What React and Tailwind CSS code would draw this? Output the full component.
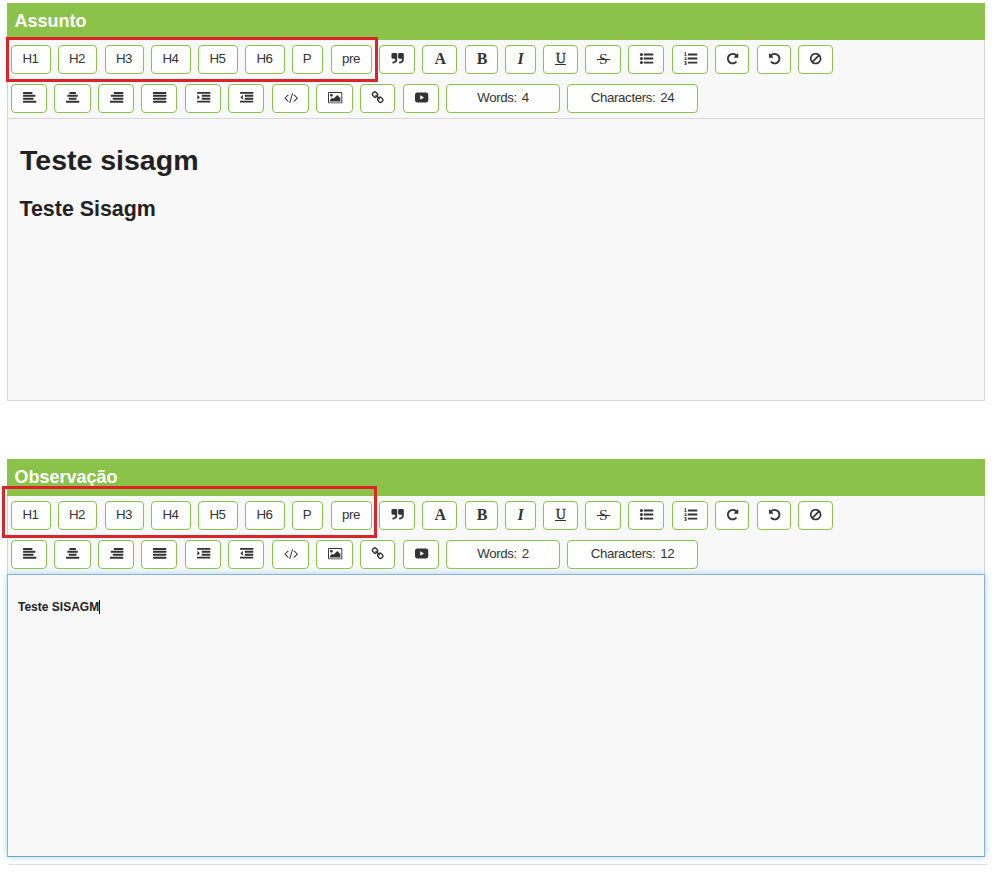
import React from "react";

function Glyph({ children, w = 1792, x = 0, px = "w-[13.3px]" }) {
  return (
    <svg viewBox={`${x} 0 ${w} 1792`} className={`${px} ml-px h-[13.3px] shrink-0 overflow-visible`} fill="currentColor">
      {children}
    </svg>
  );
}

// Four stacked bars, each given as [x, width]
function Bars({ rows }) {
  return (
    <Glyph>
      {rows.map(([x, w], i) => (
        <rect key={i} x={x} y={130 + i * 392} width={w} height="262" rx="50" />
      ))}
    </Glyph>
  );
}

function Indent({ out }) {
  return (
    <Glyph>
      <rect x="0" y="130" width="1792" height="250" rx="32" />
      <rect x="640" y="522" width="1152" height="250" rx="32" />
      <rect x="640" y="914" width="1152" height="250" rx="32" />
      <rect x="0" y="1306" width="1792" height="250" rx="32" />
      <path d={out ? "M384 520v660L50 850z" : "M50 520v660L384 850z"} />
    </Glyph>
  );
}

function List({ numbered }) {
  return (
    <Glyph>
      {[210, 754, 1298].map((y, i) => (
        <g key={y}>
          <rect x="512" y={y} width="1280" height="250" rx="32" />
          {!numbered && <circle cx="192" cy={y + 125} r="205" />}
          {numbered && i === 0 && <path d="M40 110L190 0h70v400h100v90H40v-90h110V150L90 200z" />}
          {numbered && i === 1 && <path d="M30 720q70-90 180-90 150 0 150 120 0 90-190 230h100v-60h100v160H30v-90q220-150 220-230 0-40-50-40-45 0-90 60z" />}
          {numbered && i === 2 && <path d="M40 1240h320v90l-110 110q120 20 120 150 0 170-190 170-100 0-170-60l60-80q50 40 100 40 80 0 80-60 0-70-140-60l-20-60 110-140h-70v50H40z" />}
        </g>
      ))}
    </Glyph>
  );
}

const UNDO =
  "M1664 896q0 156-61 298t-164 245-245 164-298 61q-172 0-327-72.5t-264-204.5q-7-10-6.5-22.5t8.5-20.5l137-138q10-9 25-9 16 2 23 12 73 95 179 147t225 52q104 0 198.5-40.5t163.5-109.5 109.5-163.5 40.5-198.5-40.5-198.5-109.5-163.5-163.5-109.5-198.5-40.5q-98 0-188 35.5t-160 101.5l137 138q31 30 14 69-17 40-59 40h-448q-26 0-45-19t-19-45v-448q0-42 40-59 39-17 69 14l130 129q107-101 244.5-156.5t284.5-55.5q156 0 298 61t245 164 164 245 61 298z";
const QUOTE =
  "M832 320v704q0 104-40.5 198.5t-109.5 163.5-163.5 109.5-198.5 40.5h-64q-26 0-45-19t-19-45v-128q0-26 19-45t45-19h64q106 0 181-75t75-181v-32q0-40-28-68t-68-28h-224q-80 0-136-56t-56-136v-384q0-80 56-136t136-56h384q80 0 136 56t56 136z";
const BAN =
  "M1440 893q0-161-87-295l-754 753q137 89 297 89 111 0 211.5-43.5t173.5-116.5 116-174.5 43-212.5zm-999 299l755-754q-135-91-300-91-148 0-273 73t-198 199-73 274q0 162 89 299zm1223-299q0 157-61 300t-163.5 246-245 164-298.5 61-298.5-61-245-164-163.5-246-61-300 61-299.5 163.5-245.5 245-164 298.5-61 298.5 61 245 164 163.5 245.5 61 299.5z";
const PICTURE =
  "M576 576q0 80-56 136t-136 56-136-56-56-136 56-136 136-56 136 56 56 136zm1024 384v448h-1408v-192l320-320 160 160 512-512zm96-704h-1600q-13 0-22.5 9.5t-9.5 22.5v1216q0 13 9.5 22.5t22.5 9.5h1600q13 0 22.5-9.5t9.5-22.5v-1216q0-13-9.5-22.5t-22.5-9.5zm160 32v1216q0 66-47 113t-113 47h-1600q-66 0-113-47t-47-113v-1216q0-66 47-113t113-47h1600q66 0 113 47t47 113z";
const LINK =
  "M1520 1216q0-40-28-68l-208-208q-28-28-68-28-42 0-72 32 3 3 19 18.5t21.5 21.5 15 19 13 25.5 3.5 27.5q0 40-28 68t-68 28q-15 0-27.5-3.5t-25.5-13-19-15-21.5-21.5-18.5-19q-33 31-33 73 0 40 28 68l206 207q27 27 68 27 40 0 68-26l147-146q28-28 28-67zm-703-705q0-40-28-68l-206-207q-28-28-68-28-39 0-68 27l-147 146q-28 28-28 67 0 40 28 68l208 208q27 27 68 27 42 0 72-31-3-3-19-18.5t-21.5-21.5-15-19-13-25.5-3.5-27.5q0-40 28-68t68-28q15 0 27.5 3.5t25.5 13 19 15 21.5 21.5 18.5 19q33-31 33-73zm895 705q0 120-85 203l-147 146q-83 83-203 83-121 0-204-85l-206-207q-83-83-83-203 0-123 88-209l-88-88q-86 88-208 88-120 0-204-84l-208-208q-84-84-84-204t85-203l147-146q83-83 203-83 121 0 204 85l206 207q83 83 83 203 0 123-88 209l88 88q86-88 208-88 120 0 204 84l208 208q84 84 84 204z";
const CODE =
  "M553 1399l-50 50q-10 10-23 10t-23-10l-466-466q-10-10-10-23t10-23l466-466q10-10 23-10t23 10l50 50q10 10 10 23t-10 23l-393 393 393 393q10 10 10 23t-10 23zm591-1067l-373 1291q-4 13-15.5 19.5t-23.5 2.5l-62-17q-13-4-19.5-15.5t-2.5-24.5l373-1291q4-13 15.5-19.5t23.5-2.5l62 17q13 4 19.5 15.5t2.5 24.5zm657 651l-466 466q-10 10-23 10t-23-10l-50-50q-10-10-10-23t10-23l393-393-393-393q-10-10-10-23t10-23l50-50q10-10 23-10t23 10l466 466q10 10 10 23t-10 23z";

const serif = "font-['Liberation_Serif',serif] leading-none";

const rowOne = [
  ["w-[40px]", "H1"],
  ["w-[39px]", "H2"],
  ["w-[39px] ml-px", "H3"],
  ["w-[40px]", "H4"],
  ["w-[40px]", "H5"],
  ["w-[40px]", "H6"],
  ["w-[31px]", "P"],
  ["w-[41px] ml-px", "pre"],
  ["w-[36px]", <Glyph><path d={QUOTE} /><path d={QUOTE} transform="translate(896 0)" /></Glyph>],
  ["w-[35px]", <span className={`${serif} ml-px text-[16px] font-bold`}>A</span>],
  ["w-[33px] ml-px", <span className={`${serif} ml-px text-[16px] font-bold`}>B</span>],
  ["w-[31px]", <span className={`${serif} text-[16px] font-bold italic`}>I</span>],
  ["w-[35px]", <span className={`${serif} flex h-[13px] w-[11px] justify-center border-b border-[#333] text-[14px] [-webkit-text-stroke:0.4px]`}>U</span>],
  ["w-[36px]", <span className={`${serif} flex w-[13px] justify-center bg-[linear-gradient(#333,#333)] bg-[length:100%_1px] bg-[position:0_8px] bg-no-repeat text-[15.5px]`}>S</span>],
  ["w-[36px]", <List />],
  ["w-[36px] ml-px", <List numbered />],
  ["w-[34px]", <Glyph><path d={UNDO} transform="translate(1792 0) scale(-1 1)" /></Glyph>],
  ["w-[34px] ml-px", <Glyph><path d={UNDO} /></Glyph>],
  ["w-[35px]", <Glyph><path d={BAN} /></Glyph>],
];

const rowTwo = [
  ["w-[36px]", <Bars rows={[[0, 1280], [0, 1664], [0, 1408], [0, 1792]]} />],
  ["w-[37px]", <Bars rows={[[448, 896], [192, 1408], [384, 1024], [0, 1792]]} />],
  ["w-[36px]", <Bars rows={[[512, 1280], [128, 1664], [384, 1408], [0, 1792]]} />],
  ["w-[36px]", <Bars rows={[[0, 1792], [0, 1792], [0, 1792], [0, 1792]]} />],
  ["w-[36px] ml-px", <Indent />],
  ["w-[36px]", <Indent out />],
  ["w-[37px] ml-px", <Glyph w={1920} x={-64} px="w-[14.3px]"><path d={CODE} /></Glyph>],
  ["w-[37px]", <Glyph w={1920} x={-64} px="w-[14.3px]"><path d={PICTURE} /></Glyph>],
  ["w-[35px]", <Glyph><path d={LINK} /></Glyph>],
  ["w-[36px] ml-px", <Glyph><path fillRule="evenodd" d="M300 206h1192q280 0 300 300v740q-20 300-300 300H300q-280 0-300-300V506q20-300 300-300zM710 570v620l500-310z" /></Glyph>],
];

function Button({ className, children }) {
  return (
    <button
      type="button"
      className={`flex h-[29px] shrink-0 items-center justify-center rounded-[4px] border border-[#8bc34a] bg-white pb-[2px] text-[13.3px] leading-none tracking-[-0.38px] whitespace-pre text-[#333] [word-spacing:1.5px] ${className}`}
    >
      {children}
    </button>
  );
}

function Editor({ title, words, characters, highlight, focused, children }) {
  return (
    <section className="relative mx-auto w-[978px]">
      <h3 className="h-[37px] bg-[#8bc34a] pl-[7.5px] text-[18px] leading-[36px] font-bold text-white">{title}</h3>
      <div className="flex h-[78px] flex-col gap-[10px] border-x border-[#d3d3d3] bg-[#f8f8f8] pt-[5px] pl-[3px]">
        <div className="flex gap-[7px]">
          {rowOne.map(([cls, icon], i) => (
            <Button key={i} className={cls}>
              {typeof icon === "string" ? <span className="mr-px">{icon}</span> : icon}
            </Button>
          ))}
        </div>
        <div className="flex gap-[7px]">
          {rowTwo.map(([cls, icon], i) => <Button key={i} className={cls}>{icon}</Button>)}
          <Button className="w-[114px]">Words: {words}</Button>
          <Button className="w-[131px]">Characters: {characters}</Button>
        </div>
      </div>
      <div
        className={`h-[283px] border bg-[#f8f8f8] text-[#222] ${
          focused ? "relative border-[#8aaee0] border-b-[#6ba3b8] shadow-[0_0_7px_#a9d4f8]" : "border-[#d8d8d8]"
        }`}
      >
        {children}
      </div>
      <div className={`pointer-events-none absolute border-[3px] border-[#dc232a] ${highlight}`} />
    </section>
  );
}

export default function App() {
  return (
    <main className="h-[875px] w-[997px] overflow-hidden bg-white pt-[3px] pr-[5px] font-['Liberation_Sans',Arial,sans-serif]">
      <div className="w-[992px]">
        <Editor title="Assunto" words="4" characters="24" highlight="top-[34px] -left-px h-[45px] w-[372px]">
          <h1 className="pt-[23px] pl-[12px] text-[28.5px] leading-[36px] font-bold">Teste sisagm</h1>
          <h2 className="pt-[18px] pl-[11.5px] text-[21.4px] leading-[26px] font-bold">Teste Sisagm</h2>
        </Editor>
        <div className="h-[58px]" />
        <Editor title="Observação" words="2" characters="12" focused highlight="top-[27px] -left-[5px] h-[52px] w-[375px]">
          <div className="flex items-center pt-[25px] pl-[10px]">
            <h5 className="text-[12px] leading-[14px] font-bold">Teste SISAGM</h5>
            <span className="h-[14px] w-px bg-black" />
          </div>
        </Editor>
      </div>
      <hr className="mt-[7px] ml-[9px] w-[978px] border-[#dcdcdc]" />
    </main>
  );
}
